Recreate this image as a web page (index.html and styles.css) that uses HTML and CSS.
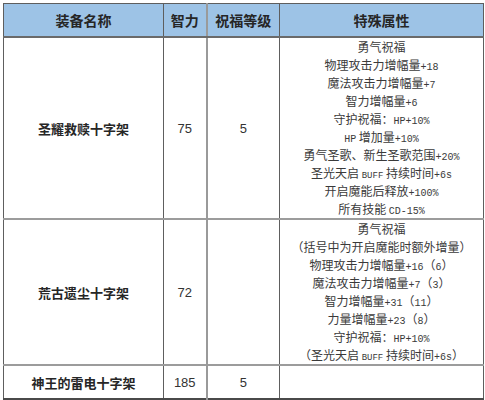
FILE: index.html
```html
<!DOCTYPE html>
<html lang="zh">
<head>
<meta charset="utf-8">
<link rel="stylesheet" href="styles.css">
</head>
<body>
<table class="gear">
  <colgroup>
    <col class="c-name">
    <col class="c-int">
    <col class="c-lvl">
    <col class="c-attr">
  </colgroup>
  <thead>
    <tr class="head">
      <th>装备名称</th>
      <th>智力</th>
      <th class="lvl">祝福等级</th>
      <th>特殊属性</th>
    </tr>
  </thead>
  <tbody>
    <tr>
      <td class="name">圣耀救赎十字架</td>
      <td class="num">75</td>
      <td class="num lvl">5</td>
      <td class="attr">
        <div class="ln">勇气祝福</div>
        <div class="ln">物理攻击力增幅量<span class="l">+18</span></div>
        <div class="ln">魔法攻击力增幅量<span class="l">+7</span></div>
        <div class="ln">智力增幅量<span class="l">+6</span></div>
        <div class="ln">守护祝福：<span class="l">HP+10%</span></div>
        <div class="ln"><span class="l">HP</span> 增加量<span class="l">+10%</span></div>
        <div class="ln">勇气圣歌、新生圣歌范围<span class="l">+20%</span></div>
        <div class="ln">圣光天启 <span class="l sm">BUFF</span> 持续时间<span class="l">+6s</span></div>
        <div class="ln">开启魔能后释放<span class="l">+100%</span></div>
        <div class="ln">所有技能 <span class="l">CD-15%</span></div>
      </td>
    </tr>
    <tr>
      <td class="name">荒古遗尘十字架</td>
      <td class="num">72</td>
      <td class="num lvl"></td>
      <td class="attr">
        <div class="ln">勇气祝福</div>
        <div class="ln">（括号中为开启魔能时额外增量）</div>
        <div class="ln">物理攻击力增幅量<span class="l">+16</span>（<span class="l">6</span>）</div>
        <div class="ln">魔法攻击力增幅量<span class="l">+7</span>（<span class="l">3</span>）</div>
        <div class="ln">智力增幅量<span class="l">+31</span>（<span class="l">11</span>）</div>
        <div class="ln">力量增幅量<span class="l">+23</span>（<span class="l">8</span>）</div>
        <div class="ln">守护祝福：<span class="l">HP+10%</span></div>
        <div class="ln">（圣光天启 <span class="l sm">BUFF</span> 持续时间<span class="l">+6s</span>）</div>
      </td>
    </tr>
    <tr class="last">
      <td class="name">神王的雷电十字架</td>
      <td class="num">185</td>
      <td class="num lvl">5</td>
      <td class="attr"></td>
    </tr>
  </tbody>
</table>
</body>
</html>
```

FILE: styles.css
```css
html, body {
  margin: 0;
  padding: 0;
  background: #ffffff;
}

body {
  padding: 3px 0 0 3px;
  font-family: "Noto Sans CJK SC", "Liberation Sans", sans-serif;
  color: #333333;
}

.gear {
  border-collapse: collapse;
  table-layout: fixed;
  width: 480px;
}

.c-name { width: 160px; }
.c-int { width: 43px; }
.c-lvl { width: 73px; }
.c-attr { width: 204px; }

.gear th,
.gear td {
  border: 1px solid #5e5e5e;
  padding: 0;
  text-align: center;
  vertical-align: middle;
}

.head th {
  height: 32px;
  background: #9dc3e6;
  color: #262626;
  font-size: 14px;
  font-weight: bold;
  border-bottom: 2px solid #6a6a6a;
}

.gear .lvl {
  border-left: 2px solid #9a9a9a;
}

.gear tbody tr {
  border-bottom: 2px solid #9c9c9c;
}

.gear tbody tr.last {
  border-bottom: 2px solid #4a4a4a;
}

.name {
  font-size: 13px;
  font-weight: bold;
  color: #262626;
}

.num {
  font-family: "Liberation Sans", sans-serif;
  font-size: 13px;
  color: #333333;
}

.last td {
  height: 32px;
}

.attr {
  font-size: 12px;
  color: #3a3a3a;
}

.ln {
  height: 18px;
  line-height: 18px;
  white-space: nowrap;
}

.l {
  font-family: "Liberation Mono", monospace;
  font-size: 10px;
}

.l.sm {
  font-size: 9px;
}
```
